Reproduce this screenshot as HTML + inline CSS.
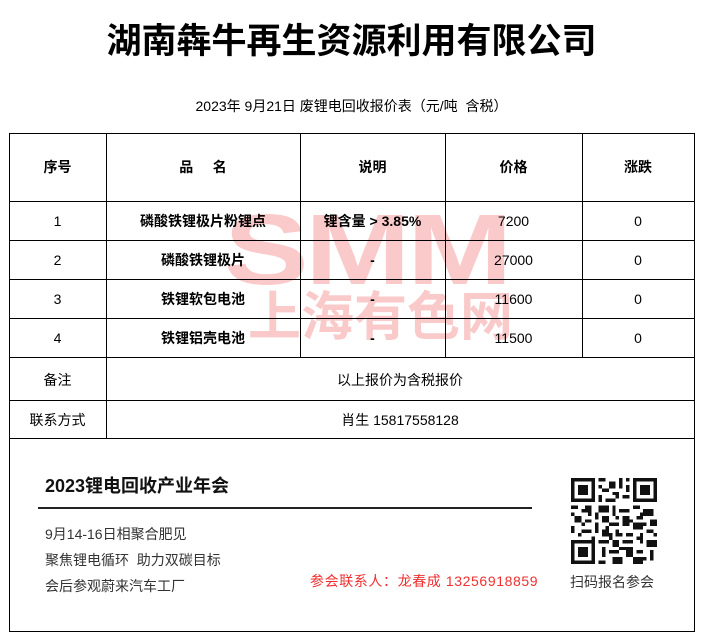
<!DOCTYPE html>
<html><head><meta charset="utf-8"><style>
*{margin:0;padding:0;box-sizing:border-box}
body{width:703px;height:644px;background:#fff;position:relative;font-family:"Liberation Sans","Noto Sans CJK SC",sans-serif;color:#000;overflow:hidden}
.a{position:absolute;white-space:nowrap}
.h{position:absolute;background:#000;height:1px}
.v{position:absolute;background:#000;width:1px}
.c{position:absolute;text-align:center;font-size:14px;line-height:20px}
.b{font-weight:bold}
</style></head><body>
<div class="a b" style="left:0;width:703px;text-align:center;top:20px;font-size:35px;line-height:44px">湖南犇牛再生资源利用有限公司</div>
<div class="a" style="left:0;width:703px;text-align:center;top:96px;font-size:14px;line-height:20px">2023年 9月21日 废锂电回收报价表（元/吨&nbsp; 含税）</div>

<!-- watermark -->
<div class="a b" style="left:224px;top:200px;font-size:100px;line-height:100px;color:rgba(240,90,90,0.32);letter-spacing:-3px;transform:scaleX(1.27);transform-origin:0 0">SMM</div>
<div class="a b" style="left:248px;top:288px;font-size:53px;line-height:60px;color:rgba(240,90,90,0.32)">上海有色网</div>

<!-- grid -->
<div class="h" style="left:9px;width:686px;top:133px"></div>
<div class="h" style="left:9px;width:686px;top:201px"></div>
<div class="h" style="left:9px;width:686px;top:240px"></div>
<div class="h" style="left:9px;width:686px;top:279px"></div>
<div class="h" style="left:9px;width:686px;top:318px"></div>
<div class="h" style="left:9px;width:686px;top:357px"></div>
<div class="h" style="left:9px;width:686px;top:400px"></div>
<div class="h" style="left:9px;width:686px;top:438px"></div>
<div class="h" style="left:9px;width:686px;top:631px"></div>
<div class="v" style="left:9px;top:133px;height:499px"></div>
<div class="v" style="left:694px;top:133px;height:499px"></div>
<div class="v" style="left:106px;top:133px;height:305px"></div>
<div class="v" style="left:300px;top:133px;height:224px"></div>
<div class="v" style="left:445px;top:133px;height:224px"></div>
<div class="v" style="left:582px;top:133px;height:224px"></div>

<div class="c b" style="left:9px;width:97px;top:157px">序号</div>
<div class="c b" style="left:106px;width:194px;top:157px">品&nbsp;&nbsp;&nbsp;&nbsp;&nbsp;名</div>
<div class="c b" style="left:300px;width:145px;top:157px">说明</div>
<div class="c b" style="left:445px;width:137px;top:157px">价格</div>
<div class="c b" style="left:582px;width:112px;top:157px">涨跌</div>

<div class="c" style="left:9px;width:97px;top:211px">1</div>
<div class="c b" style="left:106px;width:194px;top:211px">磷酸铁锂极片粉锂点</div>
<div class="c b" style="left:300px;width:145px;top:211px">锂含量 &gt; 3.85%</div>
<div class="c" style="left:445px;width:137px;top:211px">7200</div>
<div class="c" style="left:582px;width:112px;top:211px">0</div>

<div class="c" style="left:9px;width:97px;top:250px">2</div>
<div class="c b" style="left:106px;width:194px;top:250px">磷酸铁锂极片</div>
<div class="c b" style="left:300px;width:145px;top:250px">-</div>
<div class="c" style="left:445px;width:137px;top:250px">27000</div>
<div class="c" style="left:582px;width:112px;top:250px">0</div>

<div class="c" style="left:9px;width:97px;top:289px">3</div>
<div class="c b" style="left:106px;width:194px;top:289px">铁锂软包电池</div>
<div class="c b" style="left:300px;width:145px;top:289px">-</div>
<div class="c" style="left:445px;width:137px;top:289px">11600</div>
<div class="c" style="left:582px;width:112px;top:289px">0</div>

<div class="c" style="left:9px;width:97px;top:328px">4</div>
<div class="c b" style="left:106px;width:194px;top:328px">铁锂铝壳电池</div>
<div class="c b" style="left:300px;width:145px;top:328px">-</div>
<div class="c" style="left:445px;width:137px;top:328px">11500</div>
<div class="c" style="left:582px;width:112px;top:328px">0</div>

<div class="c" style="left:9px;width:97px;top:370px">备注</div>
<div class="c" style="left:106px;width:588px;top:370px">以上报价为含税报价</div>
<div class="c" style="left:9px;width:97px;top:410px">联系方式</div>
<div class="c" style="left:106px;width:588px;top:410px">肖生 15817558128</div>

<!-- bottom -->
<div class="a b" style="left:45px;top:474px;font-size:18px;line-height:24px;color:#111">2023锂电回收产业年会</div>
<div class="a" style="left:38px;top:507px;width:494px;height:2px;background:#222"></div>
<div class="a" style="left:45px;top:524px;font-size:14px;line-height:20px;color:#333">9月14-16日相聚合肥见</div>
<div class="a" style="left:45px;top:550px;font-size:14px;line-height:20px;color:#333">聚焦锂电循环&nbsp; 助力双碳目标</div>
<div class="a" style="left:45px;top:576px;font-size:14px;line-height:20px;color:#333">会后参观蔚来汽车工厂</div>
<div class="a" style="left:310px;top:571px;font-size:14px;line-height:20px;color:#f03030;letter-spacing:0.6px">参会联系人：龙春成 13256918859</div>
<div class="a" style="left:570px;top:572px;font-size:14px;line-height:20px;color:#333">扫码报名参会</div>

<svg class="a" style="left:571px;top:478px" width="86" height="86" viewBox="0 0 25 25" shape-rendering="crispEdges">
<g fill="#111">
<path d="M0 0h7v7H0zM18 0h7v7h-7zM0 18h7v7H0z"/>
</g>
<g fill="#fff"><path d="M1 1h5v5H1zM19 1h5v5h-5zM1 19h5v5H1z"/></g>
<g fill="#111"><path d="M2 2h3v3H2zM20 2h3v3h-3zM2 20h3v3H2z"/>
<path d="M8 0h2v1H8zM11 1h2v2h-2zM14 0h1v3h-1zM9 3h2v1H9zM16 2h1v2h-1zM8 5h1v2H8zM10 6h3v1h-3zM15 5h2v1h-2zM12 4h2v1h-2zM8 2h1v1H8zM13 5h1v1h-1zM16 0h1v1h-1z"/>
<path d="M0 8h2v1H0zM3 9h3v1H3zM1 11h2v2H1zM4 12h2v1H4zM0 14h1v2H0zM3 15h3v1H3zM5 10h1v1H5zM2 16h1v1H2zM0 10h1v1H0zM3 13h1v1H3z"/>
<path d="M8 8h3v2H8zM12 8h1v3h-1zM14 9h3v1h-3zM18 8h2v1h-2zM21 9h3v2h-3zM9 11h2v2H9zM15 11h2v3h-2zM19 11h2v1h-2zM23 12h2v2h-2zM7 13h1v3H7zM11 13h3v1h-3zM18 13h3v2h-3zM9 15h2v2H9zM13 15h1v2h-1zM16 16h2v1h-2zM20 16h1v3h-1zM22 15h2v1h-2zM8 18h3v1H8zM12 18h2v2h-2zM15 18h3v1h-3zM22 18h3v2h-3zM9 20h1v3H9zM11 21h3v1h-3zM16 20h2v3h-2zM19 21h2v1h-2zM23 21h1v3h-1zM12 23h3v2h-3zM18 23h3v2h-3zM8 24h2v1H8zM16 9h1v1h-1zM6 17h1v1H6zM4 8h2v1H4zM13 11h1v1h-1zM17 12h1v1h-1zM21 13h1v1h-1zM10 14h1v1h-1zM14 16h1v1h-1zM19 17h1v1h-1zM24 16h1v1h-1zM7 10h1v2H7zM20 10h1v1h-1zM11 16h1v2h-1zM14 20h2v1h-2zM21 23h1v1h-1z"/>
</g></svg>
</body></html>
